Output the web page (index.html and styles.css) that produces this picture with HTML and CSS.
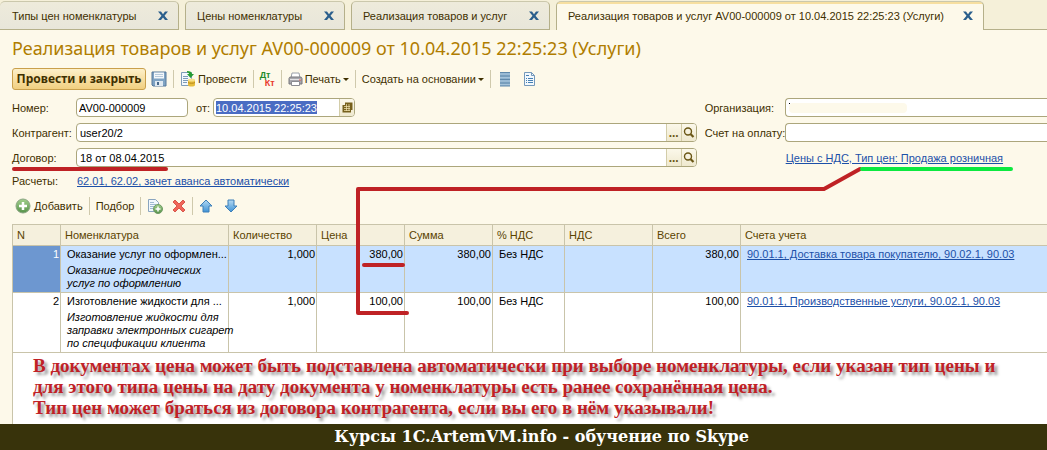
FILE: index.html
```html
<!DOCTYPE html>
<html lang="ru">
<head>
<meta charset="utf-8">
<title>Реализация товаров и услуг</title>
<link rel="stylesheet" href="styles.css">
</head>
<body>
<svg class="defs" aria-hidden="true">
  <defs>
    <linearGradient id="blue" x1="0" y1="0" x2="0" y2="1"><stop offset="0" stop-color="#b4d9f2"/><stop offset="1" stop-color="#3f93d6"/></linearGradient>
    <linearGradient id="green" x1="0" y1="0" x2="0" y2="1"><stop offset="0" stop-color="#a2d08c"/><stop offset="1" stop-color="#56924a"/></linearGradient>
    <symbol id="cross" viewBox="0 0 10 10"><path d="M0 .5h3l2 2.700 2-2.700h3L6.500 4.800 10 9H7L5 6.400 3 9H0l3.500-4.200z" fill="#2b5f8c"/></symbol>
    <symbol id="lens" viewBox="0 0 12 12"><circle cx="5" cy="4.500" r="3.500" fill="none" stroke="#6b5716" stroke-width="1.400"/><path d="M7.500 7 10.500 10" stroke="#6b5716" stroke-width="2.200"/></symbol>
  </defs>
</svg>
<div class="page">
  <nav class="tabs">
    <a class="tab tab-types" href="#"><span>Типы цен номенклатуры</span><svg class="close"><use href="#cross"/></svg></a>
    <a class="tab tab-prices" href="#"><span>Цены номенклатуры</span><svg class="close"><use href="#cross"/></svg></a>
    <a class="tab tab-sales" href="#"><span>Реализация товаров и услуг</span><svg class="close"><use href="#cross"/></svg></a>
    <a class="tab tab-doc active" href="#"><span>Реализация товаров и услуг AV00-000009 от 10.04.2015 22:25:23 (Услуги)</span><svg class="close"><use href="#cross"/></svg></a>
    <span class="strip"></span>
  </nav>

  <main class="doc">
    <h1>Реализация товаров и услуг AV00-000009 от 10.04.2015 22:25:23 (Услуги)</h1>

    <div class="toolbar">
      <button class="primary">Провести и закрыть</button>
      <button class="tool" aria-label="Записать">
        <svg width="16" height="16" viewBox="0 0 16 16"><path d="M1 1h14v14H2l-1-1z" fill="#7fa3c3" stroke="#56799b"/><path d="M3 1.500h10v6H3z" fill="#f4f8fb"/><path d="M4 3.500h8M4 5.500h8" stroke="#b7cbdc"/><path d="M4 10h8v5H4z" fill="#dfe9f1"/><path d="M6 11h2v3H6z" fill="#48698a"/></svg>
      </button>
      <span class="sep"></span>
      <button class="tool">
        <svg width="16" height="16" viewBox="0 0 16 16"><path d="M1.500 1.500h10v13h-10z" fill="#f3f8fc" stroke="#7d9cb9"/><path d="M3 5.500h5M3 7.500h5M3 9.500h5M3 11.500h4" stroke="#7d9cb9"/><path d="M7 0c3 0 5 1 5 3h2l-3.500 4L7 3h2c0-1-1-1.500-2-1.500z" fill="#259b31"/><path d="M8 9h7v5c0 2-7 2-7 0z" fill="#e7bd3c"/><ellipse cx="11.500" cy="9" rx="3.500" ry="1.500" fill="#f8e08a"/><path d="M8 11.500c1 1 6 1 7 0" fill="none" stroke="#b98a1e"/></svg>
        Провести
      </button>
      <span class="sep"></span>
      <button class="tool dtkt" aria-label="Дт Кт"><span class="dt">Дт</span><span class="kt">Кт</span></button>
      <span class="sep"></span>
      <button class="tool">
        <svg width="15" height="15" viewBox="0 0 15 15"><path d="M4 1h7l1 5H3z" fill="#fff" stroke="#9aa0a8"/><path d="M1 6.500q0-1.500 2-1.500h9q2 0 2 1.500V12H1z" fill="#a8a8ad" stroke="#77777d"/><path d="M2 7.500h11" stroke="#e3e3e6"/><path d="M3.500 9.500h8v4h-8z" fill="#fff" stroke="#8b8b90"/><path d="M11 8h2" stroke="#e2574a"/></svg>
        Печать <i class="caret"></i>
      </button>
      <span class="sep"></span>
      <button class="tool">Создать на основании <i class="caret"></i></button>
      <span class="sep"></span>
      <button class="tool tool-list" aria-label="Список">
        <svg width="12" height="16" viewBox="0 0 12 16"><path d="M1 1h10v14H1z" fill="#8fb3cf"/><path d="M1 1.500h10M1 5h10M1 8.500h10M1 12h10M1 15h10" stroke="#6089aa"/><path d="M1 3h10M1 6.500h10M1 10h10M1 13.500h10" stroke="#a5c3da"/></svg>
      </button>
      <button class="tool tool-report" aria-label="Отчет">
        <svg width="13" height="16" viewBox="0 0 13 16"><path d="M1.500 1.500h7l3 3v10h-10z" fill="#f2f8fd" stroke="#7599ba"/><path d="M8.500 1.500v3h3" fill="none" stroke="#7599ba"/><path d="M3 4.500h3M3 7.500h1M5 7.500h5M3 9.500h1M5 9.500h5M3 11.500h1M5 11.500h5" stroke="#4580b4"/></svg>
      </button>
    </div>

    <form class="form">
      <div class="column">
        <div class="row">
          <label for="num">Номер:</label>
          <input id="num" class="box box-num" type="text" value="AV00-000009">
          <label class="from" for="date">от:</label>
          <div class="box box-date">
            <span class="picked"><input id="date" type="text" value="10.04.2015 22:25:23"></span>
            <button type="button" class="inner" aria-label="Календарь"><svg width="11" height="11" viewBox="0 0 11 11"><path d="M3 .5h7.500V8H9v2.500H.5V3H3z" fill="#76601c"/><path d="M2 4.500h6M2 6.500h6M2 8.500h6M4.500 2v7M7 2v7" stroke="#f5e7b2" stroke-width=".7"/></svg></button>
          </div>
        </div>
        <div class="row">
          <label for="partner">Контрагент:</label>
          <div class="box">
            <input id="partner" type="text" value="user20/2">
            <button type="button" class="inner dots">...</button>
            <button type="button" class="inner" aria-label="Открыть"><svg width="12" height="12"><use href="#lens"/></svg></button>
          </div>
        </div>
        <div class="row">
          <label for="contract">Договор:</label>
          <div class="box">
            <input id="contract" type="text" value="18 от 08.04.2015">
            <button type="button" class="inner dots">...</button>
            <button type="button" class="inner" aria-label="Открыть"><svg width="12" height="12"><use href="#lens"/></svg></button>
          </div>
        </div>
        <div class="row row-text">
          <span class="caption">Расчеты:</span>
          <a href="#">62.01, 62.02, зачет аванса автоматически</a>
        </div>
      </div>
      <div class="column wide-labels">
        <div class="row">
          <label for="org">Организация:</label>
          <div class="box open"><span class="erased"></span><input id="org" type="text"></div>
        </div>
        <div class="row">
          <label for="bill">Счет на оплату:</label>
          <div class="box open"><input id="bill" type="text"></div>
        </div>
        <div class="row">
          <span class="caption"></span>
          <a href="#">Цены с НДС, Тип цен: Продажа розничная</a>
        </div>
      </div>
    </form>

    <div class="toolbar rows-bar">
      <button class="tool">
        <svg width="16" height="16" viewBox="0 0 16 16"><circle cx="8" cy="8" r="7" fill="url(#green)" stroke="#8aa583"/><path d="M8 4v8M4 8h8" stroke="#fff" stroke-width="2.500"/></svg>
        Добавить
      </button>
      <span class="sep"></span>
      <button class="tool">Подбор</button>
      <span class="sep"></span>
      <button class="tool" aria-label="Скопировать">
        <svg width="16" height="16" viewBox="0 0 16 16"><path d="M1.500 1.500h7l3 3v9h-10z" fill="#f2f8fd" stroke="#8aa5bf"/><path d="M3 4.500h4M3 6.500h6M3 8.500h5M3 10.500h3" stroke="#9fbad2"/><circle cx="11" cy="11" r="4.500" fill="url(#green)" stroke="#6f9a66"/><path d="M11 8.500v5M8.500 11h5" stroke="#fff" stroke-width="1.500"/></svg>
      </button>
      <button class="tool tool-delete" aria-label="Удалить">
        <svg width="14" height="14" viewBox="0 0 14 14"><path d="M1 3 3 1l4 4 4-4 2 2-4 4 4 4-2 2-4-4-4 4-2-2 4-4z" fill="#f0665a" stroke="#d8574c"/></svg>
      </button>
      <span class="sep"></span>
      <button class="tool tool-up" aria-label="Вверх">
        <svg width="14" height="14" viewBox="0 0 14 14"><path d="M7 1l6 6h-3v6H4V7H1z" fill="url(#blue)" stroke="#3d7fb8"/></svg>
      </button>
      <button class="tool" aria-label="Вниз">
        <svg width="14" height="14" viewBox="0 0 14 14"><path d="M7 13l6-6h-3V1H4v6H1z" fill="url(#blue)" stroke="#3d7fb8"/></svg>
      </button>
    </div>

    <div class="sheet">
      <table>
        <colgroup><col class="c-n"><col class="c-name"><col class="c-num"><col class="c-num"><col class="c-num"><col class="c-rate"><col class="c-num"><col class="c-num"><col></colgroup>
        <thead>
          <tr><th>N</th><th>Номенклатура</th><th>Количество</th><th>Цена</th><th>Сумма</th><th>% НДС</th><th>НДС</th><th>Всего</th><th>Счета учета</th></tr>
        </thead>
        <tbody>
          <tr class="selected">
            <td class="num">1</td>
            <td><div class="item">Оказание услуг по оформлен...</div><div class="note">Оказание посреднических<br>услуг по оформлению</div></td>
            <td class="num">1,000</td><td class="num">380,00</td><td class="num">380,00</td><td>Без НДС</td><td></td><td class="num">380,00</td>
            <td><a href="#">90.01.1, Доставка товара покупателю, 90.02.1, 90.03</a></td>
          </tr>
          <tr>
            <td class="num">2</td>
            <td><div class="item">Изготовление жидкости для ...</div><div class="note">Изготовление жидкости для<br>заправки электронных сигарет<br>по спецификации клиента</div></td>
            <td class="num">1,000</td><td class="num">100,00</td><td class="num">100,00</td><td>Без НДС</td><td></td><td class="num">100,00</td>
            <td><a href="#">90.01.1, Производственные услуги, 90.02.1, 90.03</a></td>
          </tr>
        </tbody>
      </table>
      <p class="remark">В документах цена может быть подставлена автоматически при выборе номенклатуры, если указан тип цены и<br>для этого типа цены на дату документа у номенклатуры есть ранее сохранённая цена.<br>Тип цен может браться из договора контрагента, если вы его в нём указывали!</p>
    </div>
  </main>

  <footer>Курсы 1C.ArtemVM.info - обучение по Skype</footer>

  <svg class="marks" width="1047" height="424" viewBox="0 0 1047 424" aria-hidden="true">
    <g fill="none" stroke="#bf2225" stroke-width="4" stroke-linecap="round" stroke-linejoin="round">
      <path d="M14 169H166"/>
      <path d="M860 169 824 189H358V313H407"/>
      <path d="M364 265H403"/>
    </g>
    <path d="M862 169H1011" stroke="#0ce93f" stroke-width="4" stroke-linecap="round"/>
  </svg>
</div>
</body>
</html>
```
FILE: styles.css
```css
* { box-sizing: border-box; }

body {
  margin: 0;
  background: #fdf9ea;
  color: #3f3000;
  font: 11px/14px "Liberation Sans", Arial, sans-serif;
}

button, input { font: inherit; color: inherit; }
a { color: #1c50a8; }
svg { flex: none; }
.defs { position: absolute; width: 0; height: 0; }

.page {
  position: relative;
  display: flex;
  flex-direction: column;
  min-height: 100vh;
  overflow: hidden;
}

/* Tabs */
.tabs {
  display: flex;
  height: 30px;
  padding-top: 1px;
  background: #f5f0d9;
}

.tab {
  display: flex;
  align-items: center;
  justify-content: space-between;
  flex: 0 1 auto;
  margin-right: 6px;
  padding: 0 10px 0 11px;
  border: 1px solid #b5b08a;
  border-top-color: #cbc8ac;
  border-radius: 5px 5px 0 0;
  background: linear-gradient(#eeebdb, #e8e6da);
  box-shadow: 6px 28px 0 -27px #b5b08a;
  color: #3f3000;
  text-decoration: none;
  white-space: nowrap;
}

.tab-types { width: 179px; border-left: 0; padding-left: 12px; }
.tab-prices { width: 160px; }
.tab-sales { width: 199px; }
.tab-doc { width: 428px; }

.tab.active {
  margin-right: 0;
  border-bottom: 0;
  background: linear-gradient(#f7dfa0 2px, #fdf9ea 2px);
  box-shadow: none;
}

.strip { flex: 1; border-bottom: 1px solid #b5b08a; }
.close { width: 10px; height: 10px; }

/* Document */
.doc {
  display: flex;
  flex: 1;
  flex-direction: column;
  padding-left: 12px;
}

h1 {
  margin: 8px 0 9px;
  color: #b07d00;
  font: 18px/21px "Noto Sans", Verdana, sans-serif;
  white-space: nowrap;
}

.toolbar { display: flex; align-items: center; height: 22px; }

.primary {
  height: 22px;
  width: 134px;
  margin-right: 5px;
  padding: 0;
  border: 1px solid #c9a04c;
  border-radius: 3px;
  background: linear-gradient(#fdf0c9, #f1cf80);
  font: bold 12px/16px "Noto Sans", Verdana, sans-serif;
  white-space: nowrap;
}

.tool {
  display: flex;
  align-items: center;
  gap: 2px;
  padding: 0;
  border: 0;
  background: none;
  white-space: nowrap;
}

.sep {
  width: 1px;
  height: 18px;
  margin: 0 6px;
  background: #cfc9ac;
}

.caret {
  border: 3px solid transparent;
  border-top-color: #3f3000;
  border-bottom: 0;
}

.dtkt {
  flex-direction: column;
  align-items: stretch;
  gap: 0;
  width: 15px;
  font: bold 9px/8px "Liberation Sans", Arial, sans-serif;
}

.dt { color: #218a2b; text-align: left; }
.kt { color: #e8382c; text-align: right; }
.tool-list { margin: 0 12px 0 2px; }

/* Form */
.form {
  display: grid;
  grid-template-columns: 2fr 1fr;
  gap: 8px;
  margin-top: 8px;
}

.column { display: flex; flex-direction: column; gap: 6px; }
.row { display: flex; align-items: center; height: 19px; white-space: nowrap; }
.row-text { height: 16px; }
.row > label:first-child, .caption { flex: none; width: 64px; }
.wide-labels .row > label:first-child, .wide-labels .caption { width: 80px; }
.column a { padding-left: 1px; }

.box {
  position: relative;
  display: flex;
  flex: 1;
  height: 19px;
  overflow: hidden;
  border: 1px solid #aca67c;
  border-radius: 4px;
  background: #fff;
  color: #000;
}

.box input {
  flex: 1;
  min-width: 0;
  padding: 0 3px;
  border: 0;
  background: none;
}

.box-num { flex: none; width: 112px; padding: 0 2px; }
.box-date { flex: none; width: 142px; }
.box.open { border-right: 0; border-radius: 4px 0 0 4px; }
.row > .from { margin: 0 1px 0 8px; width: 16px; }

.picked { display: flex; flex: 1; min-width: 0; padding: 2px 22px 2px 2px; }
.box .picked input { padding: 0; background: #4a6cc3; color: #fff; }

.inner {
  display: flex;
  flex: none;
  align-items: center;
  justify-content: center;
  width: 15px;
  padding: 0;
  border: 0;
  border-left: 1px solid #d3cda9;
  background: linear-gradient(#fbf8ea, #efe9cf);
  color: #6b5716;
}

.dots { font-weight: bold; font-size: 12px; }

.erased {
  position: absolute;
  top: 4px;
  left: 3px;
  width: 118px;
  height: 10px;
  border-radius: 4px;
  background: #fdf9ea;
}

.erased::before {
  content: "";
  display: block;
  width: 1px;
  height: 1px;
  background: #000;
}

/* Rows */
.rows-bar { margin: 6px 0 7px; padding-left: 3px; }
.rows-bar .tool { gap: 3px; }
.tool-delete { margin-left: 9px; }
.tool-up { margin-right: 11px; }

.sheet {
  flex: 1;
  border-top: 1px solid #c9c4aa;
  border-left: 1px solid #c9c4aa;
  background: #fff;
}

table { width: 100%; table-layout: fixed; border-collapse: separate; border-spacing: 0; }
.c-n { width: 48px; }
.c-name { width: 168px; }
.c-num { width: 88px; }
.c-rate { width: 72px; }

th, td {
  padding: 0 0 0 6px;
  border-right: 1px solid #c9c4aa;
  border-bottom: 1px solid #c9c4aa;
  color: #000;
  text-align: left;
  vertical-align: top;
  white-space: nowrap;
}

th:last-child, td:last-child { border-right: 0; }

th {
  height: 21px;
  padding-left: 4px;
  background: #f5f0dd;
  color: #5a4300;
  font-weight: normal;
  vertical-align: middle;
}

td { padding-top: 1px; }
td.num { padding: 1px 1px 0 0; text-align: right; }
.note { margin: 3px 0 2px; font-style: italic; line-height: 13px; }
.selected td { background: #c8e1ff; }
.selected td:first-child { background: #6d97d0; color: #fff; }

.remark {
  margin: 2px 0 4px;
  padding-left: 20px;
  color: #c02126;
  font: bold 19px/21px "Liberation Serif", "Times New Roman", serif;
  text-shadow: 3px 3px 3px #999;
  white-space: nowrap;
}

footer {
  height: 26px;
  padding-left: 36px;
  background: #38330b;
  color: #fff;
  font: bold 16px/26px "DejaVu Serif", Georgia, serif;
  text-align: center;
}

/* Hand-drawn pointers from the price type to the price cells */
.marks { position: absolute; top: 0; left: 0; pointer-events: none; }
```
